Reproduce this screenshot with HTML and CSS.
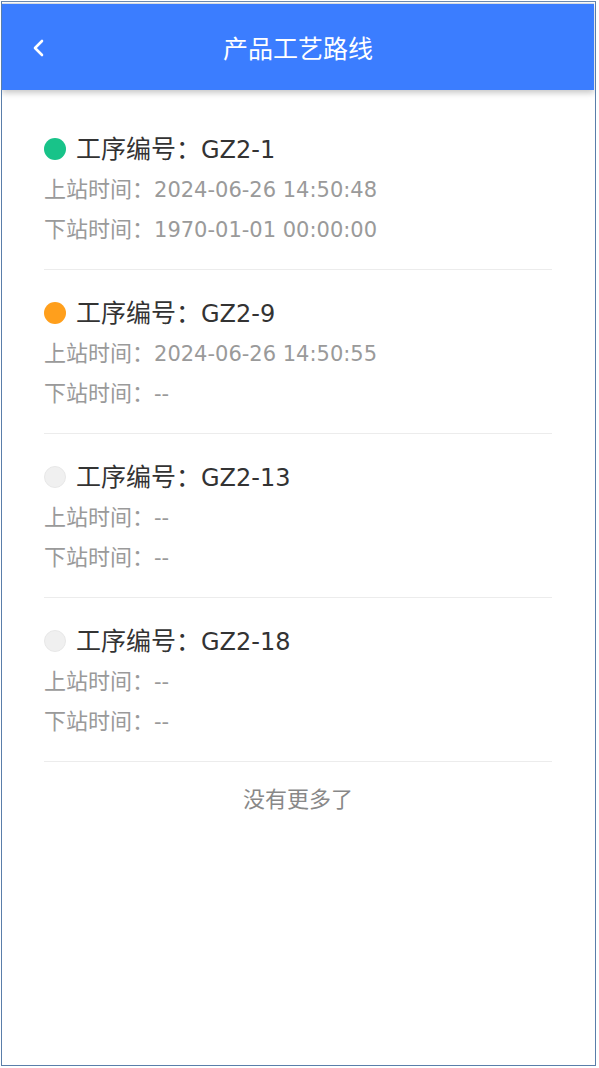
FILE: index.html
```html
<!DOCTYPE html>
<html lang="zh-CN">
	<head>
		<meta charset="UTF-8" />
		<title>产品工艺路线</title>
		<link rel="stylesheet" href="styles.css">
	</head>
	<body>
		<div class="device">
			<div class="navbar">
				<span class="back">
					<svg width="14" height="20" viewBox="0 0 14 20"><path d="M10 3 L3 10 L10 17" fill="none" stroke="#fff" stroke-width="2.6" stroke-linecap="round" stroke-linejoin="round"/></svg>
				</span>
				<h1 class="title">产品工艺路线</h1>
			</div>
			<div class="list">
				<div class="step">
					<div class="step-head"><span class="dot done"></span><span class="label">工序编号：</span><span>GZ2-1</span></div>
					<div class="step-line"><span class="label">上站时间：</span><span>2024-06-26 14:50:48</span></div>
					<div class="step-line"><span class="label">下站时间：</span><span>1970-01-01 00:00:00</span></div>
				</div>
				<div class="step">
					<div class="step-head"><span class="dot doing"></span><span class="label">工序编号：</span><span>GZ2-9</span></div>
					<div class="step-line"><span class="label">上站时间：</span><span>2024-06-26 14:50:55</span></div>
					<div class="step-line"><span class="label">下站时间：</span><span>--</span></div>
				</div>
				<div class="step">
					<div class="step-head"><span class="dot"></span><span class="label">工序编号：</span><span>GZ2-13</span></div>
					<div class="step-line"><span class="label">上站时间：</span><span>--</span></div>
					<div class="step-line"><span class="label">下站时间：</span><span>--</span></div>
				</div>
				<div class="step">
					<div class="step-head"><span class="dot"></span><span class="label">工序编号：</span><span>GZ2-18</span></div>
					<div class="step-line"><span class="label">上站时间：</span><span>--</span></div>
					<div class="step-line"><span class="label">下站时间：</span><span>--</span></div>
				</div>
				<div class="no-more">没有更多了</div>
			</div>
		</div>
	</body>
</html>
```

FILE: styles.css
```css
body {
	margin: 0;
	background-color: #fff;
	font-family: "DejaVu Sans", "Noto Sans CJK SC", sans-serif;
}
.device {
	margin: 1px;
	width: 593px;
	height: 1063px;
	border: 1px solid #5a7eaa;
	border-top-color: #6a88b0;
	overflow: hidden;
	background-color: #fff;
	box-sizing: content-box;
}
.navbar {
	position: relative;
	height: 86px;
	margin-top: 1px;
	margin-right: 1px;
	background-color: #3b7dff;
	box-shadow: 0 3px 6px rgba(0, 0, 0, 0.22);
	display: flex;
	align-items: center;
	justify-content: center;
	border-top: 1px solid #d6dbe2;
}
.back {
	position: absolute;
	left: 30px;
	top: 34px;
	display: flex;
}
.title {
	margin: 0;
	font-size: 25px;
	font-weight: normal;
	color: #fff;
	font-family: "Noto Sans CJK SC", sans-serif;
}
.label {
	font-family: "Noto Sans CJK SC", sans-serif;
}
.list {
	padding: 16px 43px 0 42px;
}
.step {
	padding: 27px 0 19px;
	border-bottom: 1px solid #ececec;
}
.step-head {
	display: flex;
	align-items: baseline;
	height: 32px;
	line-height: 28px;
	font-size: 24px;
	color: #333;
	margin-bottom: 5px;
}
.step-head .label {
	font-size: 25px;
}
.dot {
	align-self: center;
	width: 22px;
	height: 22px;
	border-radius: 50%;
	margin-right: 10px;
	background-color: #f0f0f0;
	box-sizing: border-box;
	border: 1px solid #e8e8e8;
}
.dot.done {
	background-color: #18c389;
	border: none;
}
.dot.doing {
	background-color: #ff9f1c;
	border: none;
}
.step-line {
	display: flex;
	align-items: baseline;
	height: 40px;
	line-height: 34px;
	font-size: 21px;
	color: #9a9a9a;
}
.step-line .label {
	font-size: 22px;
}
.no-more {
	text-align: center;
	font-size: 22px;
	line-height: 30px;
	color: #888;
	padding-top: 20px;
	font-family: "Noto Sans CJK SC", sans-serif;
}
```
